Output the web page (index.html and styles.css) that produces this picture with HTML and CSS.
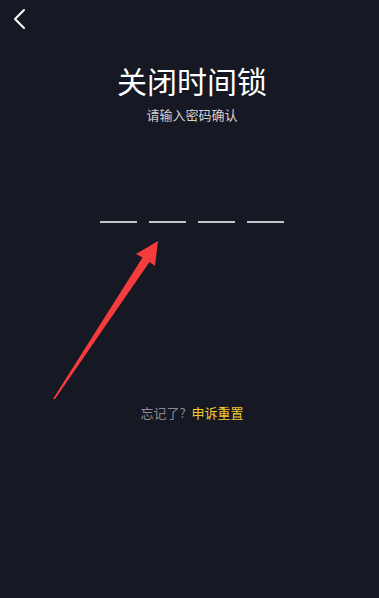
FILE: index.html
```html
<!DOCTYPE html>
<html lang="zh-CN">
<head>
<meta charset="utf-8">
<title>关闭时间锁</title>
<link rel="stylesheet" href="styles.css">
</head>
<body>
<div class="screen">
  <header class="topbar">
    <button class="back" aria-label="返回">
      <svg width="14" height="22" viewBox="0 0 14 22"><polyline points="11,2 2,11 11,20" fill="none" stroke="#ffffff" stroke-width="2" stroke-linecap="round" stroke-linejoin="round"/></svg>
    </button>
  </header>
  <main class="content">
    <h1 class="title">关闭时间锁</h1>
    <p class="subtitle">请输入密码确认</p>
    <div class="code">
      <span class="slot"></span>
      <span class="slot"></span>
      <span class="slot"></span>
      <span class="slot"></span>
    </div>
    <p class="forgot">忘记了?<span class="reset">申诉重置</span></p>
  </main>
  <svg class="arrow" width="379" height="598" viewBox="0 0 379 598">
    <polygon points="158,241 155,266 149.5,262 55,399 53,399 142.5,257.5 136,254" fill="#f53c3c"/>
  </svg>
</div>
</body>
</html>
```
FILE: styles.css
```css
html, body {
  margin: 0;
  padding: 0;
  background: #161823;
}
body {
  font-family: "Noto Sans CJK SC", "Noto Sans", sans-serif;
  color: #ffffff;
}
.screen {
  position: relative;
  width: 379px;
  height: 598px;
  overflow: hidden;
  background: #161823;
}
.topbar {
  height: 38px;
  display: flex;
  align-items: center;
  padding-left: 13px;
}
.back {
  display: flex;
  padding: 0;
  margin: 0;
  border: 0;
  background: none;
}
.content {
  display: flex;
  flex-direction: column;
  align-items: center;
  padding-left: 5px;
}
.title {
  margin: 24px 0 0;
  font-size: 30px;
  line-height: 36px;
  font-weight: 400;
  color: #ffffff;
}
.subtitle {
  margin: 8px 0 0;
  font-size: 13px;
  line-height: 18px;
  color: #d2d3d7;
}
.code {
  display: flex;
  gap: 12px;
  margin-top: 97px;
}
.slot {
  width: 37px;
  height: 1.5px;
  background: #c2c3c8;
}
.forgot {
  margin: 181px 0 0;
  font-size: 13px;
  line-height: 18px;
  color: #8a8b92;
}
.reset {
  margin-left: 6px;
  color: #f5c92a;
}
.arrow {
  position: absolute;
  left: 0;
  top: 0;
  pointer-events: none;
}
```
